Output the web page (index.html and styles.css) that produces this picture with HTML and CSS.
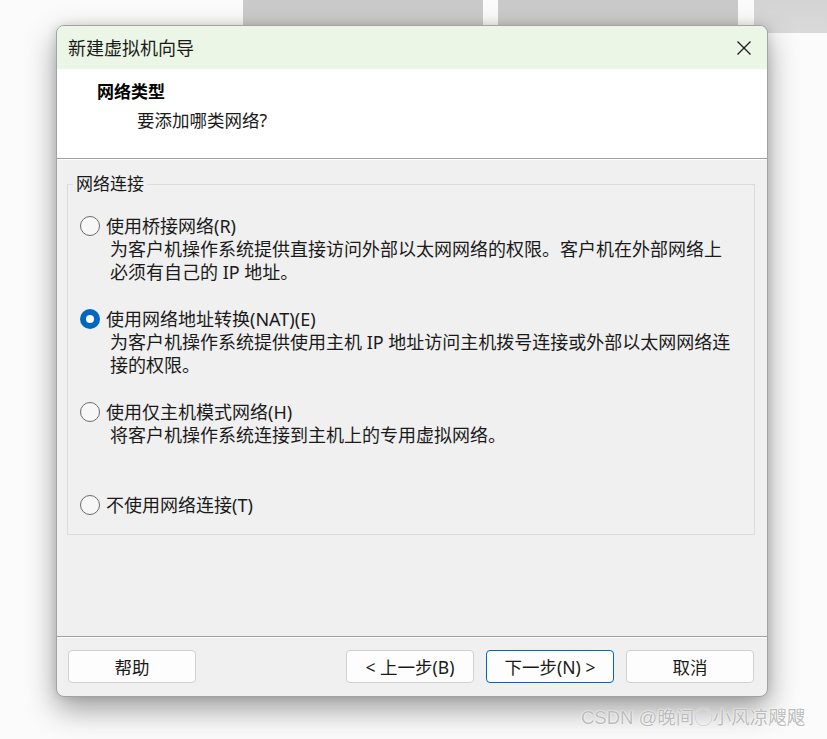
FILE: index.html
```html
<!DOCTYPE html>
<html lang="zh-CN">
<head>
<meta charset="utf-8">
<title>新建虚拟机向导</title>
<link rel="stylesheet" href="styles.css">
</head>
<body>
<div class="desktop">
  <div class="bg-window bg-1"></div>
  <div class="bg-window bg-2"></div>
  <div class="bg-window bg-3"></div>

  <div class="dialog">
    <div class="titlebar">
      <span class="title">新建虚拟机向导</span>
      <span class="close">
        <svg width="14" height="14" viewBox="0 0 14 14"><path d="M0.5 0.5 L13.5 13.5 M13.5 0.5 L0.5 13.5" stroke="#1b1b1b" stroke-width="1.3" fill="none"/></svg>
      </span>
    </div>
    <div class="header">
      <div class="h-title">网络类型</div>
      <div class="h-sub">要添加哪类网络?</div>
    </div>
    <div class="body">
      <fieldset class="group">
        <legend class="legend">网络连接</legend>
        <div class="option">
          <div class="opt-line"><span class="radio"></span><span class="opt-label">使用桥接网络(R)</span></div>
          <div class="opt-desc">为客户机操作系统提供直接访问外部以太网网络的权限。客户机在外部网络上<br>必须有自己的 IP 地址。</div>
        </div>
        <div class="option">
          <div class="opt-line"><span class="radio checked"></span><span class="opt-label">使用网络地址转换(NAT)(E)</span></div>
          <div class="opt-desc">为客户机操作系统提供使用主机 IP 地址访问主机拨号连接或外部以太网网络连<br>接的权限。</div>
        </div>
        <div class="option">
          <div class="opt-line"><span class="radio"></span><span class="opt-label">使用仅主机模式网络(H)</span></div>
          <div class="opt-desc">将客户机操作系统连接到主机上的专用虚拟网络。<br>&nbsp;</div>
        </div>
        <div class="option last">
          <div class="opt-line"><span class="radio"></span><span class="opt-label">不使用网络连接(T)</span></div>
        </div>
      </fieldset>
    </div>
    <div class="footer">
      <button class="btn">帮助</button>
      <div class="spacer"></div>
      <button class="btn">&lt; 上一步(B)</button>
      <button class="btn primary">下一步(N) &gt;</button>
      <button class="btn">取消</button>
    </div>
  </div>

  <div class="watermark">CSDN @晚间◯小风凉飕飕</div>
</div>
</body>
</html>
```

FILE: styles.css
```css
* { box-sizing: border-box; }
html, body { margin: 0; padding: 0; }
body {
  width: 827px;
  height: 739px;
  overflow: hidden;
  background: #ffffff;
  font-family: "Noto Sans", "Noto Sans CJK SC", sans-serif;
  color: #1a1a1a;
}
.desktop {
  position: relative;
  width: 827px;
  height: 739px;
  background: #fbfbfb;
}
.bg-window {
  position: absolute;
  top: 0;
  background: linear-gradient(#c9c9c9, #cfcfcf);
}
.bg-1 { left: 243px; width: 240px; height: 40px; }
.bg-2 { left: 498px; width: 240px; height: 40px; }
.bg-3 { left: 754px; width: 73px; height: 33px; background: linear-gradient(#d3d3d3, #dadada); }

.dialog {
  position: absolute;
  left: 56px;
  top: 25px;
  width: 712px;
  height: 672px;
  border: 1px solid #a3a3a3;
  border-radius: 8px;
  background: #f0f0f0;
  overflow: hidden;
  display: flex;
  flex-direction: column;
  box-shadow: 0 12px 30px rgba(0,0,0,0.38), 0 0 10px rgba(0,0,0,0.12);
}
.titlebar {
  height: 43px;
  flex: none;
  background: #ecf6e6;
  display: flex;
  align-items: center;
  justify-content: space-between;
  padding: 0 16px 0 11px;
}
.title {
  font-size: 18px;
  line-height: 24px;
  color: #1a1a1a;
}
.close { display: flex; width: 14px; height: 14px; margin-top: 1px; }

.header {
  height: 90px;
  flex: none;
  background: #ffffff;
  border-bottom: 1px solid #a0a0a0;
  padding: 12px 0 0 40px;
}
.h-title {
  font-size: 17px;
  font-weight: bold;
  line-height: 22px;
  color: #000;
}
.h-sub {
  font-size: 17.5px;
  line-height: 22px;
  margin-top: 6px;
  padding-left: 40px;
  color: #1a1a1a;
}

.body {
  flex: 1;
  border-top: 1px solid #ffffff;
  padding: 14px 12px 0 10px;
}
.group {
  margin: 0;
  padding: 20px 0 17px 12px;
  border: 1px solid #dcdcdc;
  min-width: 0;
}
.legend {
  margin-left: -7px;
  padding: 0 3px;
  font-size: 17px;
  line-height: 20px;
  color: #1a1a1a;
}
.option { margin-bottom: 23px; }
.option.last { margin-bottom: 0; }
.opt-line {
  display: flex;
  align-items: center;
  height: 24px;
}
.radio {
  width: 20px;
  height: 20px;
  border-radius: 50%;
  border: 1px solid #6b6b6b;
  background: #f7f7f7;
  flex: none;
  margin-right: 6px;
  display: flex;
  align-items: center;
  justify-content: center;
}
.radio.checked {
  border: none;
  background: #0067c0;
}
.radio.checked::after {
  content: "";
  width: 8px;
  height: 8px;
  border-radius: 50%;
  background: #ffffff;
}
.opt-label {
  font-size: 18px;
  line-height: 24px;
  color: #1a1a1a;
}
.opt-desc {
  padding-left: 30px;
  font-size: 18px;
  line-height: 23px;
  color: #1a1a1a;
  white-space: nowrap;
}

.footer {
  flex: none;
  border-top: 1px solid #a0a0a0;
  box-shadow: inset 0 1px 0 #ffffff;
  display: flex;
  gap: 12px;
  padding: 13px 13px 13px 11px;
}
.spacer { flex: 1; }
.btn {
  width: 128px;
  height: 33px;
  border: 1px solid #d0d0d0;
  border-radius: 4px;
  background: #fdfdfd;
  font-family: "Noto Sans", "Noto Sans CJK SC", sans-serif;
  font-size: 17.5px;
  line-height: 24px;
  color: #1a1a1a;
  padding: 0;
}
.btn.primary {
  border: 1px solid #0067c0;
}

.watermark {
  position: absolute;
  left: 581px;
  top: 705px;
  font-family: "Liberation Sans", "Noto Sans CJK SC", sans-serif;
  font-size: 18.5px;
  line-height: 26px;
  color: #bcbcbc;
  text-shadow: 0 0 2px #ffffff, 0 0 1px #ffffff;
  white-space: nowrap;
}
```
